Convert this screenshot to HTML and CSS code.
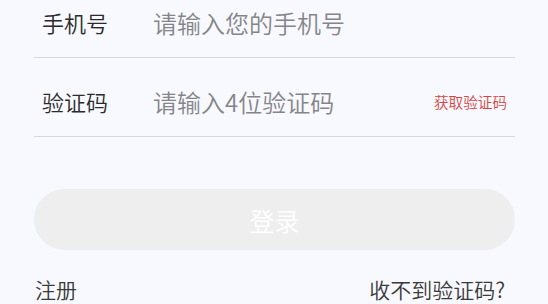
FILE: index.html
```html
<!DOCTYPE html>
<html lang="zh-CN">
<head>
<meta charset="utf-8">
<link rel="stylesheet" href="styles.css">
</head>
<body>
<div class="page">
  <form class="form">
    <div class="row">
      <span class="label">手机号</span>
      <input class="input" type="text" placeholder="请输入您的手机号">
    </div>
    <div class="row">
      <span class="label">验证码</span>
      <input class="input" type="text" placeholder="请输入4位验证码">
      <span class="code">获取验证码</span>
    </div>
    <button class="submit" type="button">登录</button>
    <div class="links">
      <span class="link">注册</span>
      <span class="link">收不到验证码?</span>
    </div>
  </form>
</div>
</body>
</html>
```
FILE: styles.css
```css
html, body {
  margin: 0;
  padding: 0;
  background: #f8f9fe;
  font-family: "Noto Sans CJK SC", "Noto Sans", sans-serif;
}
.page {
  width: 548px;
  height: 304px;
  overflow: hidden;
}
.form {
  margin: -21px 33px 0 34px;
  display: flex;
  flex-direction: column;
}
.row {
  display: flex;
  align-items: center;
  height: 70px;
  padding: 8px 8px 0 8px;
  border-bottom: 1px solid #d9d9dc;
}
.label {
  width: 111px;
  flex: none;
  font-size: 22px;
  font-weight: 350;
  color: #2b2b2b;
}
.input {
  flex: 1;
  min-width: 0;
  border: none;
  outline: none;
  background: transparent;
  padding: 0;
  font-family: inherit;
  font-size: 24px;
  font-weight: 350;
  color: #333;
}
.input::placeholder {
  color: #858589;
}
.code {
  flex: none;
  font-size: 14.6px;
  font-weight: 350;
  color: #d64541;
}
.submit {
  margin-top: 52px;
  height: 61px;
  border: none;
  border-radius: 31px;
  background: #eeeeee;
  color: #ffffff;
  font-family: inherit;
  font-size: 25px;
  font-weight: 350;
  padding: 0;
}
.links {
  display: flex;
  justify-content: space-between;
  margin-top: 22px;
  padding: 0 10px 0 1px;
}
.link {
  font-size: 21px;
  font-weight: 350;
  color: #3a3a3a;
  line-height: 34px;
}
```
